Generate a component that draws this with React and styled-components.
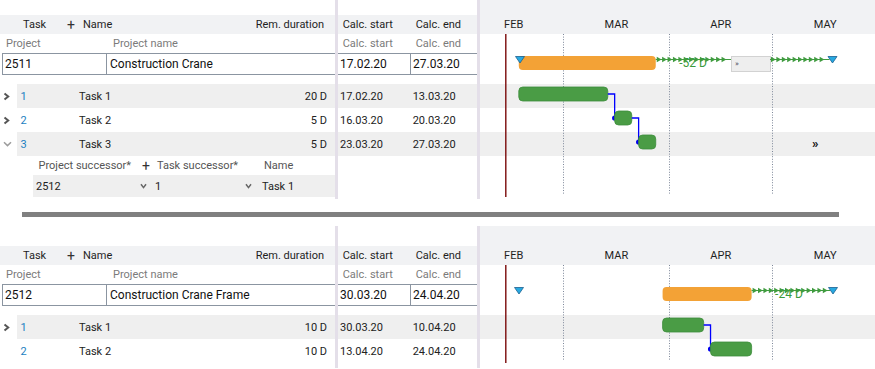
import React from "react";
import styled, { createGlobalStyle } from "styled-components";

const GlobalStyle = createGlobalStyle`
  html, body {
    margin: 0;
    padding: 0;
    background: #fff;
  }
  body {
    font-family: Roboto, "Liberation Sans", Arial, sans-serif;
    font-size: 11px;
    color: #222;
  }
`;

// timeline scale: px per day, Feb 1 2020 sits 16px left of the chart edge
const DAY = 3.424;
const ORIGIN = -16;
const MONTH_START = { 2: 0, 3: 29, 4: 60, 5: 90 };
const dx = (d, m) => ORIGIN + (MONTH_START[m] + d - 1) * DAY;

const months = [
  { label: "FEB", days: 29 },
  { label: "MAR", days: 31 },
  { label: "APR", days: 30 },
  { label: "MAY", days: 31 },
];

const topProject = {
  id: "2511",
  name: "Construction Crane",
  start: "17.02.20",
  end: "27.03.20",
  bar: [dx(17, 2), dx(28, 3)],
  startMark: 40,
  endMark: 352.5,
  slack: "-52 D",
  box: [251, 290],
  more: true,
  tasks: [
    { no: 1, name: "Task 1", dur: "20 D", start: "17.02.20", end: "13.03.20", toggle: "right", bar: [dx(17, 2), dx(14, 3)] },
    { no: 2, name: "Task 2", dur: "5 D", start: "16.03.20", end: "20.03.20", toggle: "right", bar: [dx(16, 3), dx(21, 3)] },
    { no: 3, name: "Task 3", dur: "5 D", start: "23.03.20", end: "27.03.20", toggle: "down", bar: [dx(23, 3), dx(28, 3)] },
  ],
  successor: { project: "2512", task: "1", name: "Task 1" },
};

const bottomProject = {
  id: "2512",
  name: "Construction Crane Frame",
  start: "30.03.20",
  end: "24.04.20",
  bar: [dx(30, 3), dx(25, 4)],
  startMark: 39,
  endMark: 353,
  slack: "-24 D",
  tasks: [
    { no: 1, name: "Task 1", dur: "10 D", start: "30.03.20", end: "10.04.20", toggle: "right", bar: [dx(30, 3), dx(11, 4)] },
    { no: 2, name: "Task 2", dur: "10 D", start: "13.04.20", end: "24.04.20", toggle: null, bar: [dx(13, 4), dx(25, 4)] },
  ],
};

const Page = styled.div`
  width: 875px;
`;

const Panel = styled.section`
  display: flex;
  align-items: stretch;
`;

const Divider = styled.div`
  width: 3px;
  flex-shrink: 0;
  background: #e4dfe9;
`;

const Column = styled.div`
  display: flex;
  flex-direction: column;
  flex-shrink: 0;
  width: ${(p) => p.$w}px;
  padding-bottom: ${(p) => p.$pb || 0}px;
`;

const Spacer = styled.div`
  height: ${(p) => p.$h}px;
`;

const HeadRow = styled.div`
  height: 19px;
  display: flex;
  align-items: center;
  background: #f1f2f4;
  color: #1f1f1f;
  white-space: nowrap;
`;

const LabelRow = styled.div`
  height: 19px;
  display: flex;
  align-items: center;
  color: #7b7b7b;
  white-space: nowrap;
`;

const Cell = styled.div`
  flex: ${(p) => (p.$w ? "0 0 auto" : "1 1 auto")};
  width: ${(p) => (p.$w ? `${p.$w}px` : "auto")};
  padding-left: ${(p) => p.$pl || 0}px;
  padding-right: ${(p) => p.$pr || 0}px;
  text-align: ${(p) => (p.$right ? "right" : "left")};
  box-sizing: border-box;
`;

const Plus = styled.span`
  flex: 0 0 ${(p) => p.$w}px;
  font-size: 14px;
  line-height: 1;
  color: #333;
`;

const InputRow = styled.div`
  height: 22px;
  box-sizing: border-box;
  display: flex;
  align-items: center;
  margin-left: ${(p) => p.$ml || 0}px;
  border-top: 1px solid #8b95a1;
  border-bottom: 1px solid #8b95a1;
  font-size: 12px;
  color: #111;
`;

const InputCell = styled.div`
  height: 100%;
  display: flex;
  align-items: center;
  box-sizing: border-box;
  flex: ${(p) => (p.$w ? `0 0 ${p.$w}px` : "1 1 auto")};
  padding-left: ${(p) => p.$pl}px;
  border-left: ${(p) => (p.$bl ? "1px solid #8b95a1" : "none")};
  border-right: ${(p) => (p.$br ? "1px solid #8b95a1" : "none")};
  white-space: nowrap;
`;

const TaskRow = styled.div`
  height: 24px;
  display: flex;
  align-items: center;
  background: ${(p) => (p.$shade ? "#efefef" : "transparent")};
`;

const Toggle = styled.div`
  flex: 0 0 17px;
  height: 100%;
  display: flex;
  align-items: center;
  padding-left: 3px;
  box-sizing: border-box;
  background: #fff;
`;

const RowBody = styled.div`
  flex: 1;
  height: 100%;
  display: flex;
  align-items: center;
  background: ${(p) => (p.$shade ? "#efefef" : "transparent")};
`;

const TaskNo = styled(Cell)`
  color: #1d7fc1;
`;

const SubHeadRow = styled.div`
  height: 19px;
  display: flex;
  align-items: center;
  margin-left: 33px;
  color: #555;
  white-space: nowrap;
`;

const SubRow = styled.div`
  height: 22px;
  display: flex;
  align-items: center;
  margin-left: 33px;
  background: #efefef;
`;

const Select = styled.div`
  flex: 0 0 ${(p) => p.$w}px;
  display: flex;
  align-items: center;
  justify-content: space-between;
  padding-left: ${(p) => p.$pl}px;
  padding-right: ${(p) => p.$pr}px;
  box-sizing: border-box;
`;

const Chart = styled.div`
  flex: 1;
  display: flex;
  flex-direction: column;
  overflow: hidden;
`;

const ChartHead = styled.div`
  height: ${(p) => p.$h}px;
  display: flex;
  flex-direction: column;
  justify-content: flex-end;
  background: #f1f2f4;
`;

const MonthRow = styled.div`
  height: 19px;
  display: flex;
  align-items: center;
  margin-left: ${ORIGIN}px;
`;

const Month = styled.div`
  flex: 0 0 ${(p) => p.$w}px;
  text-align: center;
  color: #1f1f1f;
`;

const ChartBody = styled.div`
  position: relative;
`;

const Band = styled.div`
  height: ${(p) => p.$h}px;
  background: ${(p) => (p.$shade ? "#efefef" : "transparent")};
`;

const Overlay = styled.svg`
  position: absolute;
  left: 0;
  top: 0;
  width: 100%;
  height: 100%;
  overflow: visible;
  font-family: Roboto, "Liberation Sans", Arial, sans-serif;
`;

const Separator = styled.div`
  height: 5px;
  background: #808080;
  margin: 13px 36px 9px 22px;
`;

const ChevronRight = () => (
  <svg width="7" height="9" viewBox="0 0 7 9">
    <path d="M1.5 1.5 L5.2 4.5 L1.5 7.5" fill="none" stroke="#555" strokeWidth="2" />
  </svg>
);

const ChevronDown = ({ color = "#9d9d9d", w = 9 }) => (
  <svg width={w} height="6" viewBox={`0 0 ${w} 6`}>
    <path d={`M1 1.2 L${w / 2} 4.6 L${w - 1} 1.2`} fill="none" stroke={color} strokeWidth="1.5" />
  </svg>
);

const Arrows = ({ x1, x2, y }) => {
  const pitch = 5.4;
  const n = Math.floor((x2 - x1 - 1) / pitch);
  return (
    <g fill="#3f9b3f">
      <line x1={x1} x2={x2} y1={y} y2={y} stroke="#3f9b3f" strokeWidth="1" />
      {Array.from({ length: n }, (_, i) => {
        const x = x1 + 1 + i * pitch;
        return <polygon key={i} points={`${x},${y - 2.7} ${x + 4.8},${y} ${x},${y + 2.7}`} />;
      })}
    </g>
  );
};

const Marker = ({ cx }) => (
  <polygon
    points={`${cx - 4.5},22.5 ${cx + 4.5},22.5 ${cx},29`}
    fill="#27a9e1"
    stroke="#1b5f8f"
    strokeWidth="0.8"
  />
);

const ChartOverlay = ({ data, height }) => {
  const boundaries = [29, 60, 90].map((d) => Math.round(ORIGIN + d * DAY) + 0.5);
  const [b1, b2] = data.bar;
  const lineY = 25.5;
  return (
    <Overlay>
      {boundaries.map((x) => (
        <line key={x} x1={x} x2={x} y1="0" y2={height - 2} stroke="#7d8799" strokeWidth="1" strokeDasharray="1 1.6" />
      ))}
      <line x1="25.8" x2="25.8" y1="0" y2={height} stroke="#7a0a0a" strokeWidth="1.4" />

      <rect x={b1} y="22" width={b2 - b1} height="14" rx="4" fill="#f3a236" />
      <text x={b2 + 23.5} y="33" fontSize="12" fill="#3a9a3a">{data.slack}</text>
      {data.box ? (
        <>
          <Arrows x1={b2} x2={data.box[0]} y={lineY} />
          <rect x={data.box[0] + 0.5} y="22.5" width={data.box[1] - data.box[0]} height="15" fill="#eeeeee" stroke="#d2d2d2" />
          <text x={data.box[0] + 4} y="32" fontSize="8" fill="#556">»</text>
          <Arrows x1={data.box[1]} x2={data.endMark - 3} y={lineY} />
        </>
      ) : (
        <Arrows x1={b2} x2={data.endMark - 3} y={lineY} />
      )}
      <Marker cx={data.startMark} />
      <Marker cx={data.endMark} />

      {data.tasks.map((t, i) => {
        const top = 50 + 24 * i;
        const next = data.tasks[i + 1];
        return (
          <g key={t.no}>
            <rect x={t.bar[0]} y={top + 3} width={t.bar[1] - t.bar[0]} height="14" rx="4" fill="#4a9c45" stroke="#3e8e3c" strokeWidth="0.8" />
            {next && (
              <>
                <path
                  d={`M${t.bar[1]} ${top + 10} H${next.bar[0]} V${top + 34}`}
                  fill="none"
                  stroke="#0000ff"
                  strokeWidth="1.3"
                />
                <circle cx={next.bar[0]} cy={top + 34} r="2.6" fill="#0000ee" />
              </>
            )}
          </g>
        );
      })}
      {data.more && (
        <text x="332" y="114" fontSize="13" fontWeight="bold" fill="#111">»</text>
      )}
    </Overlay>
  );
};

const GanttPanel = ({ data, topPad, padBottom }) => {
  const hasSub = !!data.successor;
  const bodyHeight = 19 + 22 + 9 + 24 * data.tasks.length + (hasSub ? 41 : 0);
  return (
    <Panel>
      <Column $w={335} $pb={padBottom}>
        <Spacer $h={topPad} />
        <HeadRow>
          <Cell $w={67} $pl={23}>Task</Cell>
          <Plus $w={16}>+</Plus>
          <Cell>Name</Cell>
          <Cell $pr={11} $right>Rem. duration</Cell>
        </HeadRow>
        <LabelRow>
          <Cell $w={107} $pl={6}>Project</Cell>
          <Cell $pl={6}>Project name</Cell>
        </LabelRow>
        <InputRow $ml={2}>
          <InputCell $w={105} $pl={2} $bl $br>{data.id}</InputCell>
          <InputCell $pl={3}>{data.name}</InputCell>
        </InputRow>
        <Spacer $h={9} />
        {data.tasks.map((t, i) => (
          <TaskRow key={t.no}>
            <Toggle>
              {t.toggle === "right" && <ChevronRight />}
              {t.toggle === "down" && <ChevronDown />}
            </Toggle>
            <RowBody $shade={i % 2 === 0}>
              <TaskNo $w={62} $pl={3.5}>{t.no}</TaskNo>
              <Cell>{t.name}</Cell>
              <Cell $pr={8} $right>{t.dur}</Cell>
            </RowBody>
          </TaskRow>
        ))}
        {hasSub && (
          <>
            <SubHeadRow>
              <Cell $w={109} $pl={5.5}>Project successor*</Cell>
              <Plus $w={15}>+</Plus>
              <Cell $w={101}>Task successor*</Cell>
              <Cell $pl={6}>Name</Cell>
            </SubHeadRow>
            <SubRow>
              <Select $w={117} $pl={3} $pr={3}>
                {data.successor.project}
                <ChevronDown color="#666" w={7} />
              </Select>
              <Select $w={106} $pl={5} $pr={4}>
                {data.successor.task}
                <ChevronDown color="#666" w={7} />
              </Select>
              <Cell $pl={6}>{data.successor.name}</Cell>
            </SubRow>
          </>
        )}
      </Column>

      <Divider />

      <Column $w={139}>
        <Spacer $h={topPad} />
        <HeadRow>
          <Cell $w={73} $pl={4.7}>Calc. start</Cell>
          <Cell $pl={4.7}>Calc. end</Cell>
        </HeadRow>
        <LabelRow>
          <Cell $w={73} $pl={4.7}>Calc. start</Cell>
          <Cell $pl={4.7}>Calc. end</Cell>
        </LabelRow>
        <InputRow>
          <InputCell $w={73} $pl={2} $br>{data.start}</InputCell>
          <InputCell $pl={2}>{data.end}</InputCell>
        </InputRow>
        <Spacer $h={9} />
        {data.tasks.map((t, i) => (
          <TaskRow key={t.no} $shade={i % 2 === 0}>
            <Cell $w={73} $pl={2}>{t.start}</Cell>
            <Cell $pl={1.7}>{t.end}</Cell>
          </TaskRow>
        ))}
        {hasSub && <Spacer $h={41} />}
      </Column>

      <Divider />

      <Chart>
        <ChartHead $h={topPad + 19}>
          <MonthRow>
            {months.map((m) => (
              <Month key={m.label} $w={m.days * DAY}>{m.label}</Month>
            ))}
          </MonthRow>
        </ChartHead>
        <ChartBody>
          <Band $h={19} />
          <Band $h={22} />
          <Band $h={9} />
          {data.tasks.map((t, i) => (
            <Band key={t.no} $h={24} $shade={i % 2 === 0} />
          ))}
          {hasSub && <Band $h={41} />}
          <ChartOverlay data={data} height={bodyHeight} />
        </ChartBody>
      </Chart>
    </Panel>
  );
};

export default function App() {
  return (
    <Page>
      <GlobalStyle />
      <GanttPanel data={topProject} topPad={15} padBottom={2} />
      <Separator />
      <GanttPanel data={bottomProject} topPad={20} padBottom={5} />
    </Page>
  );
}
